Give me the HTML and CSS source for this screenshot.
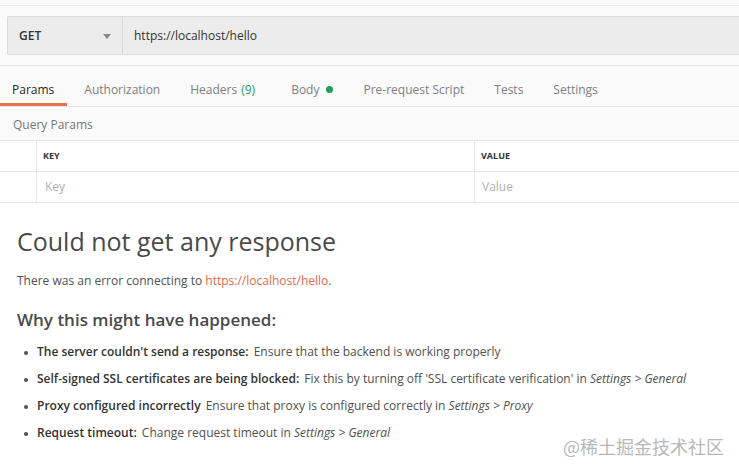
FILE: index.html
```html
<!DOCTYPE html>
<html>
<head>
<meta charset="utf-8">
<link rel="stylesheet" href="styles.css">
</head>
<body>
<div class="app">
  <div class="top-strip"></div>
  <div class="url-area">
    <div class="url-bar">
      <div class="method">
        <span class="method-name">GET</span>
        <svg class="caret" width="8" height="5" viewBox="0 0 8 5"><path d="M0 0H8L4 5Z" fill="#8a8a8a"/></svg>
      </div>
      <div class="url">https://localhost/hello</div>
    </div>
  </div>
  <div class="tabs">
    <div class="tab active">Params</div>
    <div class="tab">Authorization</div>
    <div class="tab tab-headers">Headers <span class="count">(9)</span></div>
    <div class="tab">Body <span class="dot"></span></div>
    <div class="tab">Pre-request Script</div>
    <div class="tab">Tests</div>
    <div class="tab">Settings</div>
  </div>
  <div class="params">
    <div class="params-title">Query Params</div>
    <div class="table">
      <div class="row head">
        <div class="cell check"></div>
        <div class="cell key">KEY</div>
        <div class="cell value">VALUE</div>
      </div>
      <div class="row">
        <div class="cell check"></div>
        <div class="cell key ph">Key</div>
        <div class="cell value ph">Value</div>
      </div>
    </div>
  </div>
  <div class="response">
    <h1 class="title">Could not get any response</h1>
    <p class="msg">There was an error connecting to <a class="link">https://localhost/hello</a>.</p>
    <h2 class="why">Why this might have happened:</h2>
    <ul class="reasons">
      <li><b>The server couldn't send a response:</b> Ensure that the backend is working properly</li>
      <li><b>Self-signed SSL certificates are being blocked:</b> Fix this by turning off 'SSL certificate verification' in <i>Settings &gt; General</i></li>
      <li><b>Proxy configured incorrectly</b> Ensure that proxy is configured correctly in <i>Settings &gt; Proxy</i></li>
      <li><b>Request timeout:</b> Change request timeout in <i>Settings &gt; General</i></li>
    </ul>
    <div class="watermark">@稀土掘金技术社区</div>
  </div>
</div>
</body>
</html>
```
FILE: styles.css
```css
* { box-sizing: border-box; }
html, body { margin: 0; padding: 0; }
body {
  font-family: "Open Sans", "Noto Sans", sans-serif;
  color: #505050;
  background: #fff;
  width: 739px;
  height: 472px;
  overflow: hidden;
}
.app { display: flex; flex-direction: column; }
.top-strip {
  height: 6px;
  background: #fafafa;
  border-bottom: 1px solid #ebebeb;
}
.url-area {
  background: #fafafa;
  padding: 10px 0 10px 7px;
  border-bottom: 1px solid #e6e6e6;
}
.url-bar {
  display: flex;
  height: 39px;
  background: #ececec;
  border: 1px solid #dcdcdc;
  border-right: none;
  border-radius: 2px 0 0 2px;
}
.method {
  width: 115px;
  display: flex;
  align-items: center;
  justify-content: space-between;
  padding: 0 11px 0 11px;
  border-right: 1px solid #d8d8d8;
}
.method-name {
  font-size: 12px;
  font-weight: 600;
  color: #333;
}
.caret { margin-top: 1px; }
.url {
  display: flex;
  align-items: center;
  padding-left: 11px;
  font-size: 12px;
  color: #333;
}
.tabs {
  display: flex;
  height: 41px;
  background: #fafafa;
  border-bottom: 1px solid #e6e6e6;
}
.tab {
  display: flex;
  align-items: center;
  padding: 10px 13px 0 12px;
  margin-right: 5px;
  font-size: 12px;
  color: #808080;
  border-bottom: 3px solid transparent;
  white-space: nowrap;
}
.tab-headers { margin-right: 11px; }
.tab.active {
  color: #282828;
  border-bottom-color: #e4734f;
}
.count { color: #2a9b5a; margin-left: 4px; }
.dot {
  display: inline-block;
  width: 7px;
  height: 7px;
  border-radius: 50%;
  background: #1e9e57;
  margin-left: 7px;
}
.params { background: #fafafa; }
.params-title {
  height: 33px;
  display: flex;
  align-items: center;
  padding: 2px 0 0 13px;
  font-size: 12px;
  color: #777;
}
.table { border-top: 1px solid #e6e6e6; background: #fff; }
.row {
  display: flex;
  height: 31px;
  border-bottom: 1px solid #e6e6e6;
}
.cell {
  display: flex;
  align-items: center;
  font-size: 12px;
  padding-bottom: 1px;
}
.cell.check { width: 37px; border-right: 1px solid #e6e6e6; }
.cell.key { width: 438px; padding-left: 6px; border-right: 1px solid #e6e6e6; }
.cell.value { flex: 1; padding-left: 6px; }
.head .cell { font-size: 9px; font-weight: 700; color: #333; }
.ph { color: #b0b0b0; padding-left: 8px !important; }
.cell.value.ph { padding-left: 7px !important; }
.response {
  position: relative;
  flex: 1;
  padding: 22px 17px 0 17px;
  height: 270px;
}
.title {
  margin: 0;
  font-size: 25px;
  font-weight: 400;
  color: #4a4a4a;
  line-height: 32px;
}
.msg {
  margin: 15px 0 0 0;
  font-size: 12px;
  line-height: 18px;
  color: #505050;
}
.link { color: #e5694a; text-decoration: none; }
.why {
  margin: 18px 0 0 0;
  font-size: 17px;
  font-weight: 600;
  color: #4a4a4a;
  line-height: 24px;
}
.reasons {
  margin: 11px 0 0 0;
  padding-left: 20px;
  list-style: none;
}
.reasons li {
  position: relative;
  font-size: 12px;
  line-height: 18px;
  margin-bottom: 9px;
  color: #505050;
  white-space: nowrap;
}
.reasons li::before {
  content: "";
  position: absolute;
  left: -13px;
  top: 8px;
  width: 4px;
  height: 4px;
  border-radius: 50%;
  background: #505050;
}
.reasons b { font-weight: 600; color: #333; margin-right: 2px; }
.reasons i { font-style: italic; }
.watermark {
  position: absolute;
  right: 15px;
  top: 230px;
  font-family: "Noto Sans CJK SC", sans-serif;
  font-size: 18px;
  color: #b8b8b8;
}
```
